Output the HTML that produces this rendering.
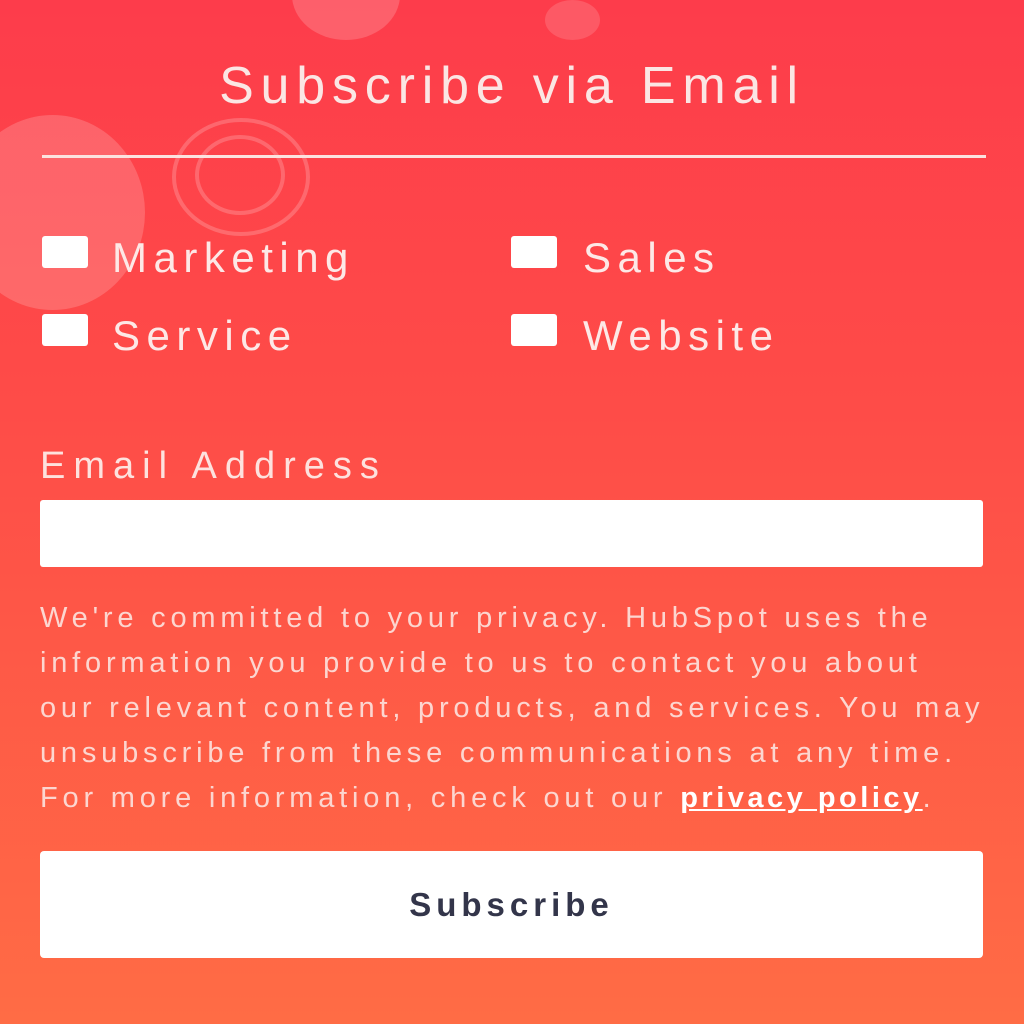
<!DOCTYPE html>
<html><head><style>
body{margin:0;width:1024px;height:1024px;overflow:hidden;background:linear-gradient(180deg,#fd3c4b 0%,#fe4c48 40%,#ff6c45 100%);font-family:"Liberation Sans",sans-serif;color:#fde8e6;position:relative}
.a{position:absolute}
.circ{position:absolute;border-radius:50%}
h1{position:absolute;left:0;width:1024px;top:56px;margin:0;text-align:center;font-weight:normal;font-size:52px;letter-spacing:6.8px;color:#fbe6e4}
.cb{position:absolute;width:46px;height:32px;background:#fff;border-radius:3px}
.lb{position:absolute;font-size:42px;letter-spacing:6.5px}
p{position:absolute;left:40px;top:596px;width:980px;margin:0;font-size:29px;line-height:45px;letter-spacing:4.8px;color:#fcd6d0;white-space:nowrap}
</style></head><body>
<div class="circ" style="left:292px;top:-50px;width:108px;height:90px;background:rgba(255,255,255,.18)"></div>
<div class="circ" style="left:545px;top:0px;width:55px;height:40px;background:rgba(255,255,255,.15)"></div>
<div class="circ" style="left:-40px;top:115px;width:185px;height:195px;background:rgba(255,255,255,.18)"></div>
<div class="circ" style="left:172px;top:118px;width:130px;height:110px;border:4px solid rgba(255,255,255,.2)"></div>
<div class="circ" style="left:195px;top:135px;width:82px;height:72px;border:4px solid rgba(255,255,255,.2)"></div>
<h1>Subscribe via Email</h1>
<div class="a" style="left:42px;top:155px;width:944px;height:3px;background:#fbe2df"></div>
<div class="cb" style="left:42px;top:236px"></div><div class="lb" style="left:112px;top:234px">Marketing</div>
<div class="cb" style="left:511px;top:236px"></div><div class="lb" style="left:583px;top:234px">Sales</div>
<div class="cb" style="left:42px;top:314px"></div><div class="lb" style="left:112px;top:312px">Service</div>
<div class="cb" style="left:511px;top:314px"></div><div class="lb" style="left:583px;top:312px">Website</div>
<div class="a" style="left:40px;top:445px;font-size:38px;letter-spacing:8px;color:#fde2de">Email Address</div>
<div class="a" style="left:40px;top:500px;width:943px;height:67px;background:#fff;border-radius:3px"></div>
<p>We're committed to your privacy. HubSpot uses the<br>information you provide to us to contact you about<br>our relevant content, products, and services. You may<br>unsubscribe from these communications at any time.<br>For more information, check out our <b style="text-decoration:underline;color:#fff;letter-spacing:3.5px">privacy policy</b>.</p>
<div class="a" style="left:40px;top:851px;width:943px;height:107px;background:#fff;border-radius:4px;text-align:center;line-height:107px;font-size:33px;font-weight:bold;color:#33354a;letter-spacing:5px">Subscribe</div>
</body></html>
